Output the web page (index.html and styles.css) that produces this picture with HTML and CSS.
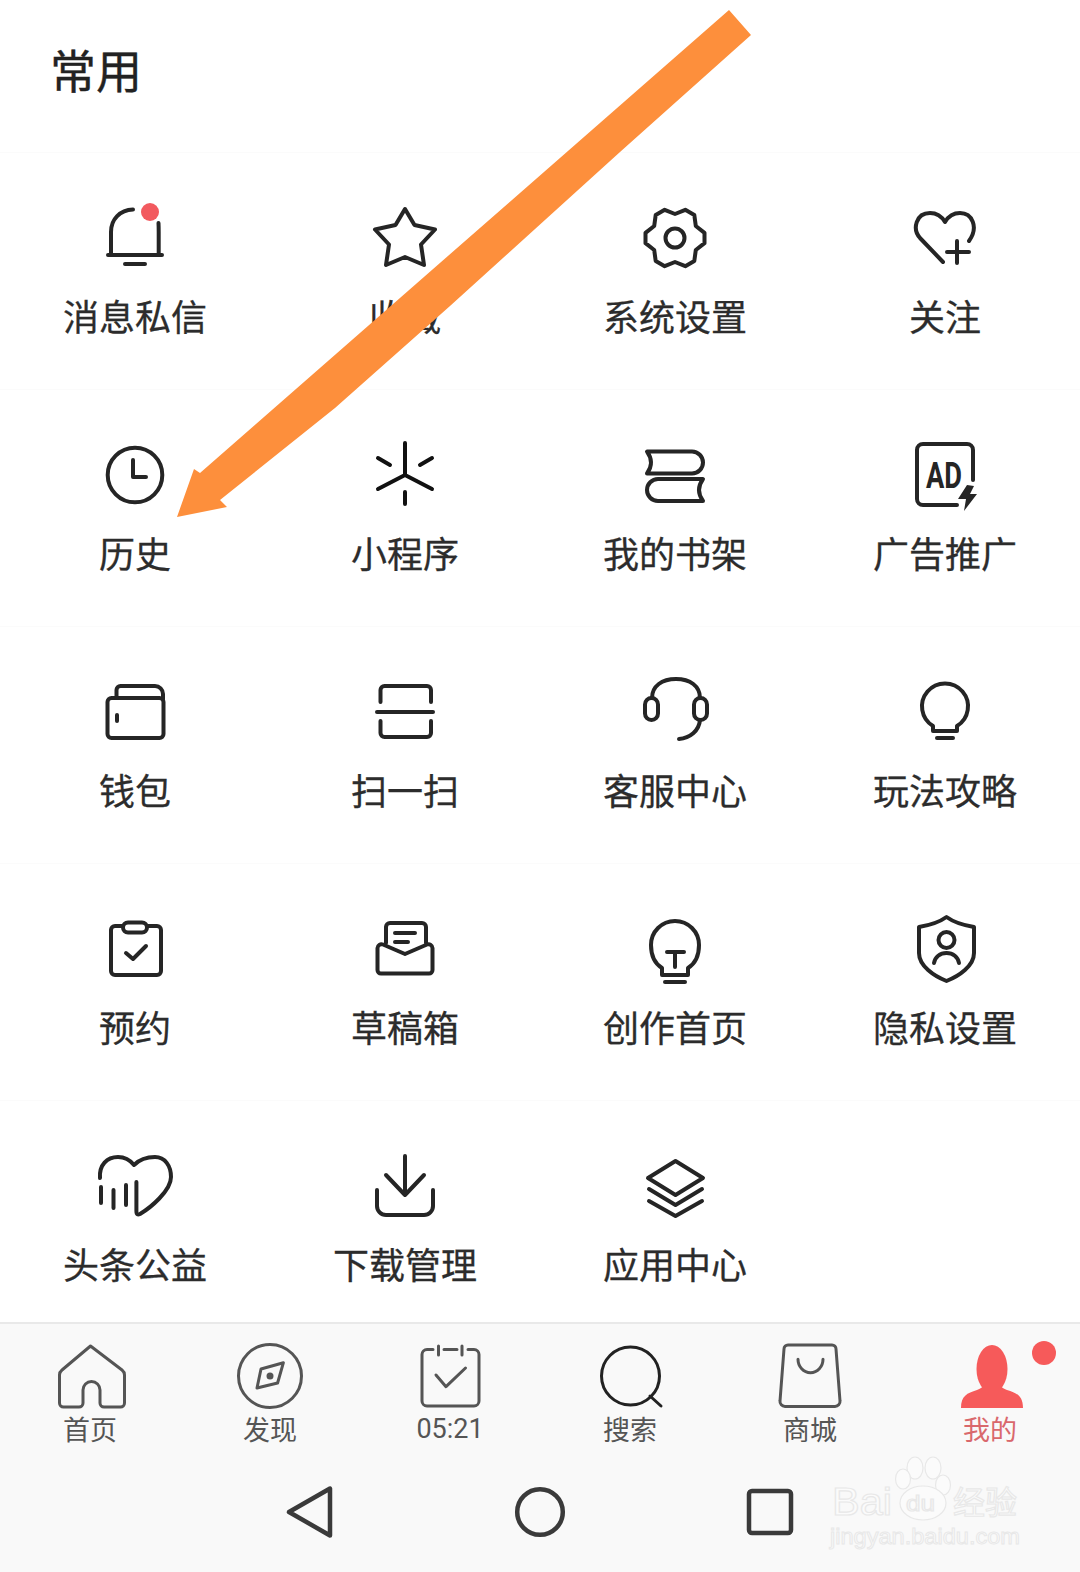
FILE: index.html
```html
<!doctype html>
<html lang="zh-CN">
<head>
    <meta charset="utf-8">
    <title>常用</title>
    <link rel="stylesheet" href="styles.css">
</head>
<body>
<div class="page">
    <main class="content">
        <h1 class="title">常用</h1>
        <div class="grid">
            <div class="cell">
                <svg class="icon" viewBox="0 0 66 66"><path d="M9 50V27C9 14 18 5 31 4.500"/><path d="M56.500 18C56.700 22 56.700 24 56.700 27V50"/><path d="M6 50H60M23 59H43"/><circle class="dot" cx="48" cy="7" r="9"/></svg>
                <span class="label">消息私信</span>
            </div>
            <div class="cell">
                <svg class="icon" viewBox="0 0 66 66"><path d="M33 4L42.500 20L63 24.500L49 39.500L52 60L33 52L14 60L17 39.500L3 24.500L23.500 20Z"/></svg>
                <span class="label">收藏</span>
            </div>
            <div class="cell">
                <svg class="icon" viewBox="0 0 66 66"><path d="M33 9L43.300 4.800L52.300 10L53.800 21L62.500 27.800V38.200L53.800 45L52.300 56L43.300 61.200L33 57L22.700 61.200L13.700 56L12.200 45L3.500 38.200V27.800L12.200 21L13.700 10L22.700 4.800Z"/><circle cx="33" cy="33" r="9.500"/></svg>
                <span class="label">系统设置</span>
            </div>
            <div class="cell">
                <svg class="icon" viewBox="0 0 66 66"><path d="M31 57L8 33C0 24 4 8 18 8C25 8 30 12 33 17C36 12 41 8 48 8C60 8 67 22 57 36"/><path d="M35 47H57M45 36V58"/></svg>
                <span class="label">关注</span>
            </div>

            <div class="cell">
                <svg class="icon" viewBox="0 0 66 66"><circle cx="33" cy="33" r="27.300"/><path d="M31 18V35H44"/></svg>
                <span class="label">历史</span>
            </div>
            <div class="cell">
                <svg class="icon icon-dark" viewBox="0 0 66 66"><path d="M33 1V33L6 47M33 33L60 47M6 16L18 23M60 16L48 23M33 50V62"/></svg>
                <span class="label">小程序</span>
            </div>
            <div class="cell">
                <svg class="icon" viewBox="0 0 66 66"><path d="M5 9.500H50A11 11 0 0 1 50 31.500H5Q13 20.500 5 9.500Z"/><path d="M61 37H16A11 11 0 0 0 16 59H61Q53 48 61 37Z"/></svg>
                <span class="label">我的书架</span>
            </div>
            <div class="cell">
                <svg class="icon" viewBox="0 0 66 66"><path d="M61 38V8A6 6 0 0 0 55 2H11A6 6 0 0 0 5 8V57A6 6 0 0 0 11 63H45"/><text class="ad-text" x="14" y="46" textLength="36" lengthAdjust="spacingAndGlyphs">AD</text><path class="solid" d="M55 43L46 57H54L52 69L65 52H58L62 44Z"/></svg>
                <span class="label">广告推广</span>
            </div>

            <div class="cell">
                <svg class="icon" viewBox="0 0 66 66"><rect x="5.500" y="19" width="56" height="40" rx="4"/><path d="M14.500 19V11A4 4 0 0 1 18.500 7H53A8 8 0 0 1 61 15V20"/><path d="M15 36V42"/></svg>
                <span class="label">钱包</span>
            </div>
            <div class="cell">
                <svg class="icon" viewBox="0 0 66 66"><path d="M8.500 23V11A4 4 0 0 1 12.500 7H55A4 4 0 0 1 59 11V23"/><path d="M5 33H61"/><path d="M8.500 42V54A4 4 0 0 0 12.500 58H55A4 4 0 0 0 59 54V42"/></svg>
                <span class="label">扫一扫</span>
            </div>
            <div class="cell">
                <svg class="icon" viewBox="0 0 66 66"><path d="M10 19C10 7 20 0 34 0C48 0 58 7 58 19"/><rect x="3" y="19" width="13" height="22" rx="6.500"/><rect x="52" y="19" width="13" height="22" rx="6.500"/><path d="M58 41C57 52 48 59 37 60"/></svg>
                <span class="label">客服中心</span>
            </div>
            <div class="cell">
                <svg class="icon" viewBox="0 0 66 66"><path d="M21 52V47A23 23 0 1 1 45 47V52Z"/><path d="M25 59H41"/></svg>
                <span class="label">玩法攻略</span>
            </div>

            <div class="cell">
                <svg class="icon" viewBox="0 0 66 66"><rect x="9" y="10" width="50" height="49" rx="4"/><rect class="knock" x="21" y="6.500" width="24" height="10" rx="5"/><path d="M24 37L31 43L44 30"/></svg>
                <span class="label">预约</span>
            </div>
            <div class="cell">
                <svg class="icon" viewBox="0 0 66 66"><path d="M14 27V11A4 4 0 0 1 18 7H50A4 4 0 0 1 54 11V27"/><path d="M23 17H43M23 26H36"/><path d="M5.500 32A4 4 0 0 1 11 28.500L33 38L55 28.500A4 4 0 0 1 60.500 32V54A3.500 3.500 0 0 1 57 57.500H9A3.500 3.500 0 0 1 5.500 54Z"/></svg>
                <span class="label">草稿箱</span>
            </div>
            <div class="cell">
                <svg class="icon" viewBox="0 0 66 66"><path d="M20 59V52C12 47 9 38 9 29A24 24 0 1 1 57 29C57 38 54 47 46 52V59Z"/><path d="M23 66H43"/><path d="M25 36H42M33 36V51"/></svg>
                <span class="label">创作首页</span>
            </div>
            <div class="cell">
                <svg class="icon" viewBox="0 0 66 66"><path d="M34.500 1C40 5 50 9 62 11V37C62 50 47 60 34.500 65C22 60 7 50 7 37V11C19 9 29 5 34.500 1Z"/><circle cx="34.500" cy="24" r="8"/><path d="M22 47C23 41 28 37 34.500 37C41 37 46 41 47 47"/></svg>
                <span class="label">隐私设置</span>
            </div>

            <div class="cell">
                <svg class="icon" viewBox="0 0 66 66"><path d="M-2 25C-3 12 5 4 16 4C23 4 28 7 32 12C37 7 44 4 53 4C63 4 69 13 69 24C69 38 48 55 38 61C36 62 34.400 62 34.400 58V29"/><path d="M-1 34V50M11.500 37V55M24 32V52"/></svg>
                <span class="label">头条公益</span>
            </div>
            <div class="cell">
                <svg class="icon" viewBox="0 0 66 66"><path d="M33 3V42M14 22L33 42L52 22"/><path d="M5 37V53A9 9 0 0 0 14 62H52A9 9 0 0 0 61 53V37"/></svg>
                <span class="label">下载管理</span>
            </div>
            <div class="cell">
                <svg class="icon" viewBox="0 0 66 66"><path d="M33.500 8L61 25L33.500 42L6 25Z"/><path d="M7 36L33.500 52L60 36M7 48L33.500 63L60 48"/></svg>
                <span class="label">应用中心</span>
            </div>
        </div>
    </main>

    <footer class="bottom">
        <nav class="tabs">
            <div class="tab">
                <svg class="tab-icon" viewBox="0 0 70 70"><path d="M35.500 5L67 29Q69.500 31 69.500 34V62A4 4 0 0 1 65.500 66H49A4 4 0 0 1 45 62V49A8.500 8.500 0 0 0 28 49V62A4 4 0 0 1 24 66H8.500A4 4 0 0 1 4.500 62V34Q4.500 31 7 29Z"/></svg>
                <span class="tab-label">首页</span>
            </div>
            <div class="tab">
                <svg class="tab-icon" viewBox="0 0 70 70"><circle cx="35" cy="35" r="31.500"/><path d="M48.400 21.700L26 28L22 47L42.600 42Z"/><circle class="tab-dot" cx="35" cy="35" r="3.500"/></svg>
                <span class="tab-label">发现</span>
            </div>
            <div class="tab">
                <svg class="tab-icon" viewBox="0 0 70 70"><path d="M18 8.500H12A5 5 0 0 0 7 13.500V60A5 5 0 0 0 12 65H59A5 5 0 0 0 64 60V13.500A5 5 0 0 0 59 8.500H53"/><path d="M29 8.500H42M23.500 5V14M47 5V14M21 34L31 45.700L50.500 27"/></svg>
                <span class="tab-label tab-time">05:21</span>
            </div>
            <div class="tab">
                <svg class="tab-icon tab-icon-dark" viewBox="0 0 70 70"><circle cx="35.500" cy="35" r="29"/><path d="M55 55L66 65"/></svg>
                <span class="tab-label">搜索</span>
            </div>
            <div class="tab">
                <svg class="tab-icon" viewBox="0 0 70 70"><path d="M13 4H57A4 4 0 0 1 61 8L65 60A5 5 0 0 1 60 65.500H10A5 5 0 0 1 5 60L9 8A4 4 0 0 1 13 4Z"/><path d="M23 18.300A12.500 13.400 0 0 0 48 18.300"/></svg>
                <span class="tab-label">商城</span>
            </div>
            <div class="tab tab-active">
                <svg class="tab-icon tab-person" viewBox="0 0 70 70"><ellipse cx="37" cy="28" rx="15.500" ry="24"/><path d="M6 67C6 55 12 52 22 49C27 47 29 45 29 42H45C45 45 47 47 52 49C62 52 68 55 68 67Z"/></svg>
                <span class="tab-label">我的</span>
                <span class="badge"></span>
            </div>
        </nav>
        <div class="sysnav">
            <svg class="sys-icon" viewBox="0 0 60 60"><path d="M9 30L50 6.500V53.500Z"/></svg>
            <svg class="sys-icon" viewBox="0 0 60 60"><circle cx="30" cy="30" r="22.800"/></svg>
            <svg class="sys-icon" viewBox="0 0 60 60"><rect x="9" y="9" width="42" height="42" rx="3"/></svg>
        </div>
    </footer>

    <svg class="watermark" viewBox="0 0 200 100">
        <ellipse cx="89" cy="13" rx="8" ry="11"/>
        <ellipse cx="107" cy="13" rx="8" ry="11"/>
        <ellipse cx="77" cy="24" rx="7.500" ry="10"/>
        <ellipse cx="117" cy="30" rx="7.500" ry="10"/>
        <ellipse cx="97" cy="48" rx="23" ry="17"/>
        <text class="wm-big" x="6" y="60" textLength="60" lengthAdjust="spacingAndGlyphs">Bai</text>
        <text class="wm-mid" x="80" y="56" textLength="29" lengthAdjust="spacingAndGlyphs">du</text>
        <text class="wm-cn" x="127" y="59" textLength="64" lengthAdjust="spacingAndGlyphs">经验</text>
        <text class="wm-url" x="4" y="89" textLength="190" lengthAdjust="spacingAndGlyphs">jingyan.baidu.com</text>
    </svg>

    <svg class="arrow" viewBox="0 0 1080 1572"><polygon points="729,10 751,35 620,152 450,306 335,408 220,500 227,507 177,517 194,469 200,473"/></svg>
</div>
</body>
</html>
```

FILE: styles.css
```css
* {
    box-sizing: border-box;
}
html, body {
    margin: 0;
    background: #fff;
}
.page {
    position: relative;
    width: 1080px;
    height: 1572px;
    display: flex;
    flex-direction: column;
    overflow: hidden;
    font-family: "Noto Sans CJK SC", "Noto Sans", sans-serif;
}
.content {
    height: 1322px;
    overflow: hidden;
    flex: none;
}
.title {
    margin: 0;
    height: 153px;
    padding: 43px 0 0 50px;
    font-size: 46px;
    line-height: 50px;
    font-weight: 400;
    color: #222;
    -webkit-text-stroke: 0.4px #222;
    border-bottom: 1px solid #fbfbfb;
}
.grid {
    display: grid;
    grid-template-columns: repeat(4, 270px);
    grid-auto-rows: 237px;
}
.cell {
    display: flex;
    flex-direction: column;
    align-items: center;
    padding-top: 52px;
    border-bottom: 1px solid #fbfbfb;
}
.label {
    margin-top: 19px;
    font-size: 36px;
    line-height: 50px;
    color: #2c2c2c;
    -webkit-text-stroke: 0.3px #2c2c2c;
}

/* icons */
.icon {
    width: 66px;
    height: 66px;
    flex: none;
    overflow: visible;
    fill: none;
    stroke: #252525;
    stroke-width: 4;
    stroke-linecap: round;
    stroke-linejoin: round;
}
.icon-dark {
    stroke: #111;
}
.icon .dot {
    fill: #f25a5f;
    stroke: none;
}
.icon .solid {
    fill: #252525;
    stroke: none;
}
.icon .knock {
    fill: #fff;
}
.ad-text {
    font-family: "Roboto", sans-serif;
    font-size: 36px;
    font-weight: 700;
    fill: #252525;
    stroke: none;
}

/* bottom bar */
.bottom {
    flex: 1;
    background: #f9f9f9;
    border-top: 2px solid #e9e9e9;
    padding-top: 17px;
}
.tabs {
    display: grid;
    grid-template-columns: repeat(6, 180px);
}
.tab {
    position: relative;
    display: flex;
    flex-direction: column;
    align-items: center;
}
.tab-icon {
    width: 70px;
    height: 70px;
    overflow: visible;
    fill: none;
    stroke: #555;
    stroke-width: 3;
    stroke-linecap: round;
    stroke-linejoin: round;
}
.tab-icon-dark {
    stroke: #222;
}
.tab-icon .tab-dot {
    fill: #555;
    stroke: none;
}
.tab-person {
    fill: #f65a5a;
    stroke: none;
}
.tab-label {
    height: 36px;
    font-size: 27px;
    line-height: 36px;
    color: #555;
}
.tab-time {
    font-family: "Roboto", sans-serif;
    font-size: 27px;
}
.tab-active .tab-label {
    color: #d9686c;
}
.badge {
    position: absolute;
    left: 132px;
    top: 0;
    width: 24px;
    height: 24px;
    border-radius: 50%;
    background: #f65a5a;
}
.sysnav {
    display: flex;
    justify-content: center;
    gap: 170px;
    margin-top: 35px;
}
.sys-icon {
    width: 60px;
    height: 60px;
    fill: none;
    stroke: #3a3a3a;
    stroke-width: 4.500;
    stroke-linejoin: round;
}

/* overlays */
.watermark {
    position: absolute;
    left: 826px;
    top: 1455px;
    width: 200px;
    height: 100px;
    overflow: visible;
    fill: #fbfbfb;
    stroke: #e8e8e8;
    stroke-width: 1.200;
}
.wm-big {
    font-family: "Liberation Sans", sans-serif;
    font-size: 39px;
}
.wm-mid {
    font-family: "Liberation Sans", sans-serif;
    font-size: 22px;
}
.wm-cn {
    font-size: 32px;
}
.wm-url {
    font-family: "Liberation Sans", sans-serif;
    font-size: 22px;
    stroke-width: 1;
}
.arrow {
    position: absolute;
    left: 0;
    top: 0;
    width: 1080px;
    height: 1572px;
    fill: #fd8f3c;
    pointer-events: none;
}
```
